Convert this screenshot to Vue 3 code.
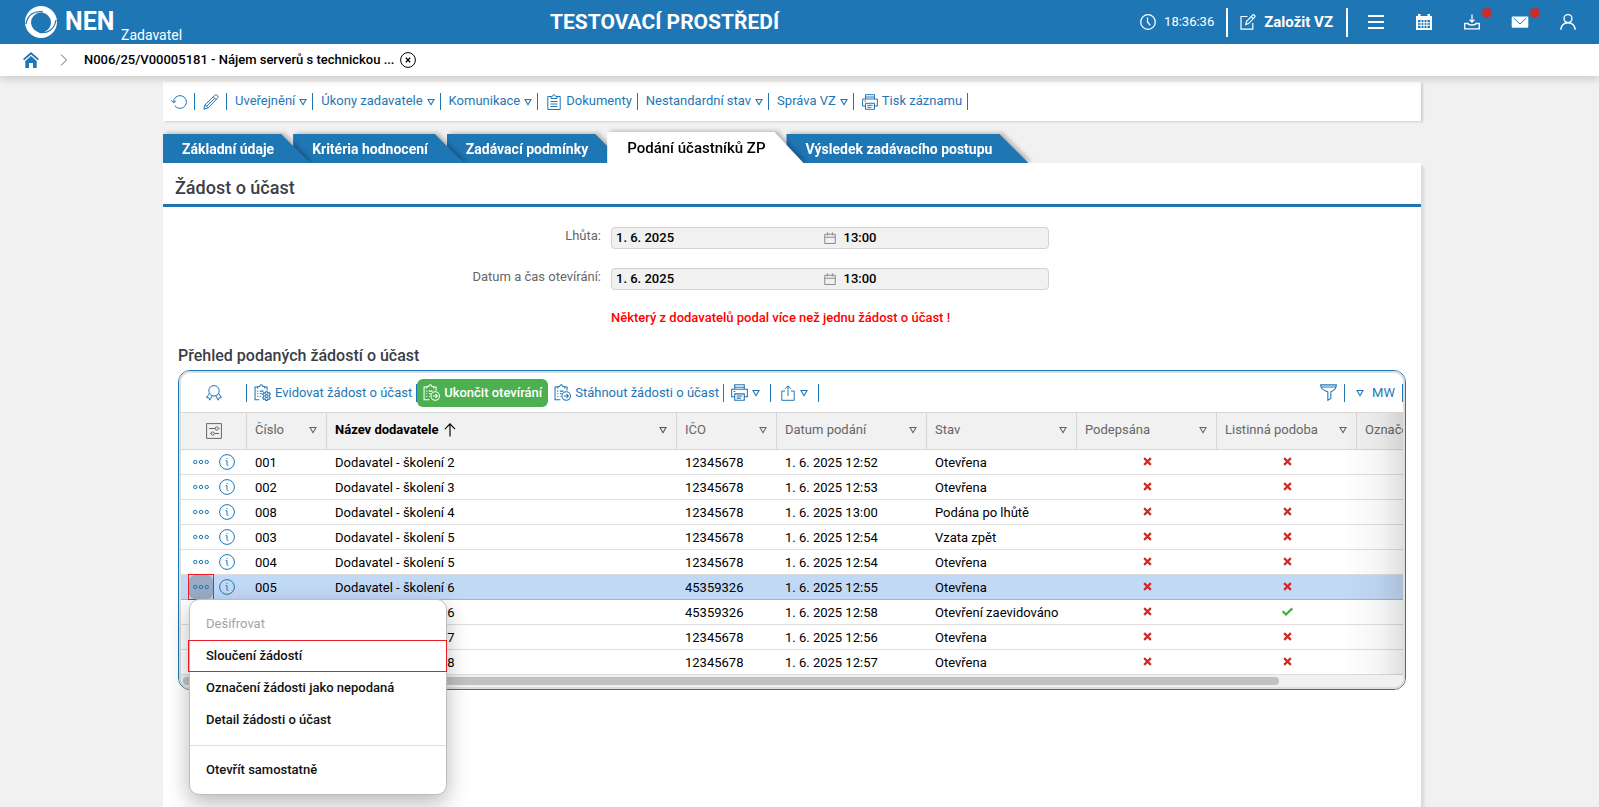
<script setup>
import { h } from 'vue'

const shapes = {
  refresh: '<path d="M2.600 8.500a6.400 6.400 0 1 1 1.300 3.400M.3 6.300l2.300 2.500 2.600-2.100"/>',
  pencil: '<path d="M.8 15.200l1.300-4.500L11.800 1.300c1.700-1.500 4.200.9 2.800 2.700L5.200 13.800zM10.300 2.800l2.900 2.900M2.100 10.700l3.100 3.100M3.600 12.300l8-8"/>',
  doc: '<path d="M5 2.500H1.800v13h12.400v-13H11M5 4.500v-2l2-.5c0-2 2-2 2 0l2 .5v2zM4.500 7.500h7M4.500 10h7M4.500 12.500h7"/>',
  print: '<path d="M3.500 5V.7h9V5M3.500 12H.6V5h14.800v7h-2.900M3.500 9.300h9v6h-9zM5.300 11.300h5.400M5.300 13.300h4M2.500 7h1.500M3.500 3h9"/>',
  badge: '<circle cx="8" cy="5.800" r="5.200"/><path d="M3.300 8.400L.6 12.600l2.300.2.900 2.400 2.400-4.400M12.700 8.400l2.700 4.200-2.300.2-.9 2.400-2.400-4.400"/>',
  docGear: '<path d="M5 14.800H1v-12h2.500M10 2.800h2.300V6M3.500 4.300V2.600l2-.4c0-2 2.600-2 2.600 0l2 .4v1.700M3 6.700h1M5.500 6.700H9M3 9.200h1M5.500 9.200h2M3 11.700h1M5.500 11.700h1"/><circle cx="11.800" cy="11.400" r="1.400"/><path d="M11 7.300h1.600l.4 1.400 1.500-.5.9 1.300-1 1.200v1.400l1 1-.9 1.300-1.500-.4-.4 1.400H11l-.5-1.400-1.500.4-.8-1.300 1-1v-1.400l-1-1.200.8-1.300 1.500.5z"/>',
  docArrow: '<path d="M6 14.800H1v-12h2.500M10 2.800h2.300V6M3.500 4.300V2.600l2-.4c0-2 2.600-2 2.600 0l2 .4v1.700M3 6.700h1M5.500 6.700H9M3 9.200h1M5.500 9.200h1.800M3 11.700h1M5.500 11.700h.8"/><circle cx="11.500" cy="11.300" r="4"/><path d="M9.300 11.300h4M11.800 9.600l1.700 1.700-1.700 1.700"/>',
  share: '<path d="M5 6H1.800v9.300h12.400V6H11M8 11V1M5 3.800L8 .8l3 3"/>',
  funnel: '<path d="M.6.8h14.800c0 4-2.600 5.700-5.200 6.600v6.300l-2.800 1.700v-8C4 6.500.6 4.600.6.800zM1 2.800h14"/>',
  tune: '<path d="M.6.600h14.800v14.800H.6zM3 5.500h6.200M4 10.500h1M8.500 10.500H13M12.500 5.500h1"/><circle cx="10.800" cy="5.500" r="1.600"/><circle cx="6.700" cy="10.500" r="1.600"/>',
  dots: '<circle cx="2.300" cy="8" r="1.700"/><circle cx="8" cy="8" r="1.700"/><circle cx="13.700" cy="8" r="1.700"/>',
  info: '<circle cx="8" cy="8" r="7.400"/><path d="M6.600 6.700H8v3.800c0 .9.400 1.200 1.400.9M7.500 4.500h1"/>',
  clock: '<circle cx="8" cy="8" r="7.300" stroke-width="1.300"/><path stroke-width="1.300" d="M7.500 3.500V8l2.800 3.300"/>',
  compose: '<path stroke-width="1.200" d="M7.500 2.500H1v12.700h11.800V9M5.800 10.500l.8-3.200 6-6.200c1.200-1.100 3.200.8 2.100 2.100L8.600 9.600zM11.200 2.700l2 2"/>',
  menu: '<path stroke-width="2" d="M0 2h16M0 8h16M0 14h16"/>',
  calendar: '<path fill="currentColor" fill-rule="evenodd" stroke="none" d="M0 2h2V0h2.500v2h7V0H14v2h2v14H0zM2 6v8h12V6z"/><path stroke-width="1" d="M2 8.700h12M2 11.300h12M5 6v8M8 6v8M11 6v8"/>',
  inbox: '<path stroke-width="1.300" d="M8 .5v7.500M5.500 5.600L8 8.100l2.500-2.500"/><path stroke-width="1.300" d="M.7 9.500H4c.5 2 7.500 2 8 0h3.300v5.300H.7z"/>',
  mail: '<rect x="-.3" y="2.500" width="16.600" height="11.300" rx="1" fill="currentColor" stroke="none"/><path stroke="#1f76b5" d="M2 4.200l6 5.800 6-5.800"/>',
  user: '<circle cx="8" cy="4.600" r="4" stroke-width="1.400"/><path stroke-width="1.400" d="M.9 15.800c0-4 2.800-7 7.100-7s7.100 3 7.100 7"/>',
  home: '<path fill="currentColor" stroke="none" d="M8 0l8 7-1.200 1.300L8 2.400 1.200 8.300 0 7zM8 4l5.700 5v7H10v-5H6v5H2.300V9z"/>',
  chevron: '<path d="M5 2.500l5.500 5.500L5 13.500"/>',
  close: '<circle cx="8" cy="8" r="7.400"/><path stroke-width="1.300" d="M5.800 5.800l4.400 4.400M10.200 5.800l-4.400 4.400"/>',
  date: '<path stroke-width="1.300" d="M1 3h14v12.300H1zM1 7h14M4.800.500V4.500M11.200.500V4.500"/>',
  up: '<path stroke-width="1.300" d="M8 15.500V1M2.200 7L8 1l5.800 6"/>',
  tri: '<path stroke-width="2.200" d="M2 3h12L8 13.500z"/>',
  cross: '<path stroke="#cf2a27" stroke-width="3.800" d="M2 2l12 12M14 2L2 14"/>',
  check: '<path stroke="#35b535" stroke-width="3.200" d="M1 7.500l4.800 4.800L15 3.500"/>',
}

const Icon = (props) =>
  h('svg', {
    viewBox: '0 0 16 16',
    width: props.size || 16,
    height: props.size || 16,
    fill: 'none',
    stroke: 'currentColor',
    overflow: 'visible',
    'aria-hidden': 'true',
    innerHTML: shapes[props.name],
  })
Icon.props = ['name', 'size']

const actions = [
  { icon: 'refresh', title: 'Obnovit' },
  { icon: 'pencil', title: 'Upravit' },
  { text: 'Uveřejnění', drop: true },
  { text: 'Úkony zadavatele', drop: true },
  { text: 'Komunikace', drop: true },
  { icon: 'doc', text: 'Dokumenty' },
  { text: 'Nestandardní stav', drop: true },
  { text: 'Správa VZ', drop: true },
  { icon: 'print', text: 'Tisk záznamu' },
]

const tabs = ['Základní údaje', 'Kritéria hodnocení', 'Zadávací podmínky', 'Podání účastníků ZP', 'Výsledek zadávacího postupu']
const activeTab = 3

const fields = [
  { id: 'lhuta', label: 'Lhůta:', date: '1. 6. 2025', time: '13:00' },
  { id: 'otevirani', label: 'Datum a čas otevírání:', date: '1. 6. 2025', time: '13:00' },
]

const columns = ['Číslo', 'Název dodavatele', 'IČO', 'Datum podání', 'Stav', 'Podepsána', 'Listinná podoba', 'Označena jako nepodaná']
const rows = [
  ['001', 'Dodavatel - školení 2', '12345678', '1. 6. 2025 12:52', 'Otevřena', false],
  ['002', 'Dodavatel - školení 3', '12345678', '1. 6. 2025 12:53', 'Otevřena', false],
  ['008', 'Dodavatel - školení 4', '12345678', '1. 6. 2025 13:00', 'Podána po lhůtě', false],
  ['003', 'Dodavatel - školení 5', '12345678', '1. 6. 2025 12:54', 'Vzata zpět', false],
  ['004', 'Dodavatel - školení 5', '12345678', '1. 6. 2025 12:54', 'Otevřena', false],
  ['005', 'Dodavatel - školení 6', '45359326', '1. 6. 2025 12:55', 'Otevřena', false],
  ['006', 'Dodavatel - školení 6', '45359326', '1. 6. 2025 12:58', 'Otevření zaevidováno', true],
  ['007', 'Dodavatel - školení 7', '12345678', '1. 6. 2025 12:56', 'Otevřena', false],
  ['009', 'Dodavatel - školení 8', '12345678', '1. 6. 2025 12:57', 'Otevřena', false],
]
const selected = '005'
</script>

<template>
  <div class="page">
    <header class="top">
      <a href="#" class="brand">
        <svg class="logo" viewBox="0 0 32 32" width="32" height="32" aria-hidden="true">
          <path fill="#fff" fill-rule="evenodd" d="M16 0a16 16 0 1 1 0 32A16 16 0 0 1 16 0zM16 6.500a10 10 0 1 0 0 20 10 10 0 0 0 0-20z" />
          <path fill="none" stroke="#1f76b5" stroke-width="1.200" d="M1 18C2.500 9 9 4.500 18 5.800M31 14c-1.500 9-8 14-17 12.300" />
        </svg>
        <span class="name">NEN</span>
        <span class="role">Zadavatel</span>
      </a>
      <div class="env">TESTOVACÍ PROSTŘEDÍ</div>
      <div class="tools">
        <span class="time"><Icon name="clock" /> 18:36:36</span>
        <button class="create"><Icon name="compose" /> Založit VZ</button>
        <button class="tool" aria-label="Menu"><Icon name="menu" /></button>
        <button class="tool" aria-label="Kalendář"><Icon name="calendar" /></button>
        <button class="tool" aria-label="Stažené soubory"><Icon name="inbox" /><i class="dot"></i></button>
        <button class="tool" aria-label="Zprávy"><Icon name="mail" /><i class="dot"></i></button>
        <button class="tool" aria-label="Uživatel"><Icon name="user" /></button>
      </div>
    </header>

    <nav class="crumbs">
      <a href="#" class="home" aria-label="Domů"><Icon name="home" /></a>
      <Icon name="chevron" class="chev" />
      <a href="#" class="crumb">N006/25/V00005181 - Nájem serverů s technickou ...</a>
      <button class="close" aria-label="Zavřít"><Icon name="close" /></button>
    </nav>

    <main class="content">
      <div class="actions">
        <button v-for="a in actions" :key="a.text || a.title" class="action" :aria-label="a.text || a.title">
          <Icon v-if="a.icon" :name="a.icon" />
          <span v-if="a.text">{{ a.text }}</span>
          <Icon v-if="a.drop" name="tri" size="8" class="drop" />
        </button>
      </div>

      <nav class="tabs">
        <div v-for="(t, i) in tabs" :key="t" class="tab" :class="{ active: i === activeTab }" :style="{ zIndex: i === activeTab ? 9 : 8 - i }">
          <a href="#">{{ t }}</a>
        </div>
      </nav>

      <section class="panel">
        <h1>Žádost o účast</h1>
        <form class="form">
          <template v-for="f in fields" :key="f.id">
            <label :for="f.id">{{ f.label }}</label>
            <div class="field">
              <input :id="f.id" type="text" class="day" :value="f.date" readonly />
              <Icon name="date" size="12" class="date" />
              <input type="text" :value="f.time" :aria-label="f.label + ' čas'" readonly />
            </div>
          </template>
          <p class="warn">Některý z dodavatelů podal více než jednu žádost o účast !</p>
        </form>

        <h2>Přehled podaných žádostí o účast</h2>
        <div class="grid">
          <div class="inner">
            <div class="bar">
              <button class="gbtn badge" aria-label="Certifikát"><Icon name="badge" /></button>
              <button class="gbtn"><Icon name="docGear" size="17" /> Evidovat žádost o účast</button>
              <button class="finish"><Icon name="docArrow" size="17" /> Ukončit otevírání</button>
              <button class="gbtn"><Icon name="docArrow" size="17" /> Stáhnout žádosti o účast</button>
              <button class="gbtn wide" aria-label="Tisk"><Icon name="print" size="17" /><Icon name="tri" size="8" /></button>
              <button class="gbtn wide" aria-label="Export"><Icon name="share" /><Icon name="tri" size="8" /></button>
              <button class="gbtn filter" aria-label="Filtr"><Icon name="funnel" size="17" /></button>
              <button class="gbtn view"><Icon name="tri" size="8" /> MW</button>
            </div>
            <div class="scroller">
              <table>
                <colgroup>
                  <col class="c-tools" /><col class="c-no" /><col class="c-name" /><col class="c-ico" />
                  <col class="c-mid" /><col class="c-mid" /><col class="c-flag" /><col class="c-flag" /><col class="c-last" />
                </colgroup>
                <thead>
                  <tr>
                    <th class="setup"><button class="plain" aria-label="Nastavení sloupců"><Icon name="tune" /></button></th>
                    <th v-for="(c, i) in columns" :key="c" :class="{ sorted: i === 1 }">
                      <div class="head">
                        <span>{{ c }}</span>
                        <Icon v-if="i === 1" name="up" size="14" />
                        <Icon name="tri" size="8" class="sort" />
                      </div>
                    </th>
                  </tr>
                </thead>
                <tbody>
                  <tr v-for="r in rows" :key="r[0]" :class="{ sel: r[0] === selected }">
                    <td class="rowtools">
                      <div class="pair">
                        <button class="plain more" :aria-label="'Akce ' + r[0]"><Icon name="dots" /></button>
                        <button class="plain" :aria-label="'Detail ' + r[0]"><Icon name="info" /></button>
                      </div>
                    </td>
                    <td v-for="n in 5" :key="n" class="text">{{ r[n - 1] }}</td>
                    <td class="flag"><Icon name="cross" size="9" /></td>
                    <td class="flag"><Icon :name="r[5] ? 'check' : 'cross'" :size="r[5] ? 11 : 9" /></td>
                    <td></td>
                  </tr>
                </tbody>
              </table>
              <div class="fade"></div>
            </div>
            <div class="track"><div class="thumb"></div></div>
          </div>

          <div class="menu">
            <button disabled>Dešifrovat</button>
            <button class="marked">Sloučení žádostí</button>
            <button>Označení žádosti jako nepodaná</button>
            <button>Detail žádosti o účast</button>
            <hr />
            <button>Otevřít samostatně</button>
          </div>
        </div>
      </section>
    </main>
  </div>
</template>

<style>
body {
  margin: 0;
  background: #f1f1f1;
}
</style>

<style scoped>
* {
  box-sizing: border-box;
}
.page {
  display: flex;
  flex-direction: column;
  min-height: 100vh;
  overflow: hidden;
  font: 13px/16px Roboto, "Liberation Sans", sans-serif;
  color: #000;
}
svg {
  display: block;
  flex: none;
}
a {
  color: inherit;
  text-decoration: none;
}
button {
  display: flex;
  align-items: center;
  padding: 0;
  border: 0;
  background: none;
  font: inherit;
  color: inherit;
}
.top {
  display: grid;
  grid-template-columns: 1fr auto 1fr;
  align-items: center;
  height: 44px;
  padding: 0 23px 0 25px;
  background: #1f76b5;
  color: #fff;
}
.brand {
  display: flex;
  align-items: center;
  height: 44px;
}
.name {
  min-width: 52px;
  margin-left: 8px;
  font-size: 25px;
  line-height: 28px;
  font-weight: 700;
}
.role {
  align-self: flex-end;
  margin: 0 0 1px 4px;
  font-size: 14px;
  line-height: 16px;
}
.env {
  padding-right: 272px;
  font-size: 21px;
  line-height: 24px;
  font-weight: 700;
}
.tools {
  display: flex;
  align-items: center;
  justify-content: flex-end;
}
.time {
  display: flex;
  align-items: center;
  gap: 8px;
  padding-right: 12px;
}
.create {
  gap: 8px;
  height: 29px;
  margin-right: 20px;
  padding: 0 13px 0 12px;
  border: solid #fff;
  border-width: 0 2px;
  font-size: 15px;
  font-weight: 700;
}
.tool {
  position: relative;
  margin-left: 32px;
}
.create + .tool {
  margin-left: 0;
}
.dot {
  position: absolute;
  top: -6px;
  right: -12px;
  width: 10px;
  height: 10px;
  border-radius: 50%;
  background: #cd2c2c;
}
.crumbs {
  display: flex;
  align-items: center;
  position: relative;
  z-index: 20;
  height: 32px;
  padding-left: 23px;
  background: #fff;
  box-shadow: 0 3px 8px rgba(0, 0, 0, 0.16);
}
.home {
  color: #1f76b5;
}
.chev {
  margin: 0 12px 0 17px;
  color: #666;
}
.crumb {
  font-weight: 500;
}
.close {
  margin-left: 6px;
}
.content {
  display: flex;
  flex: 1;
  flex-direction: column;
  margin: 6px 178px 0 163px;
}
.actions {
  display: flex;
  align-items: center;
  height: 39px;
  background: #fff;
  box-shadow: 2px 1px 2px rgba(0, 0, 0, 0.14);
  color: #1f76b5;
}
.action {
  gap: 4px;
  height: 17px;
  padding: 0 7px 0 8px;
  border-right: 1px solid #1f76b5;
}
.action:nth-child(n + 3) {
  padding: 0 5px 0 8px;
}
.action span {
  padding-bottom: 2px;
}
.tabs {
  display: flex;
  align-items: flex-end;
  height: 31px;
  margin-top: 11px;
}
.tab {
  position: relative;
  margin-right: -17px;
  filter: drop-shadow(3px -1px 2px rgba(0, 0, 0, 0.25));
}
.tab a {
  display: block;
  padding: 2px 36px 0 19px;
  background: #1f76b5;
  clip-path: polygon(0 0, calc(100% - 29px) 0, 100% 100%, 0 100%);
  font-size: 14px;
  line-height: 27px;
  font-weight: 700;
  color: #fff;
}
.tab.active a {
  padding: 2px 38px 0 20px;
  background: #fff;
  font-size: 15px;
  line-height: 29px;
  font-weight: 500;
  color: #000;
}
.panel {
  position: relative;
  z-index: 10;
  flex: 1;
  background: #fff;
  box-shadow: 3px 3px 3px rgba(0, 0, 0, 0.1);
}
h1 {
  height: 44px;
  margin: 0;
  padding: 13px 12px 0;
  border-bottom: 3px solid #1f76b5;
  font-size: 18px;
  line-height: 24px;
  font-weight: 500;
  color: #3a4046;
}
.form {
  display: grid;
  grid-template-columns: 438fr 438fr 362fr;
  gap: 19px 10px;
  padding-top: 20px;
}
.form label {
  grid-column: 1;
  padding-top: 1px;
  text-align: right;
  color: #666;
}
.field {
  display: flex;
  align-items: center;
  height: 22px;
  padding-left: 4px;
  border: 1px solid #d2d2d2;
  border-radius: 4px;
  background: #f1f1f1;
}
.field input {
  flex: 1;
  min-width: 0;
  padding: 0;
  border: 0;
  outline: 0;
  background: none;
  font: 500 13px/16px Roboto, sans-serif;
  color: #000;
}
.day {
  margin-right: 3px;
}
.date {
  margin-right: 8px;
  color: #888;
}
.warn {
  grid-column: 2;
  margin: 0;
  padding-top: 1px;
  font-weight: 500;
  white-space: nowrap;
  color: #f00;
}
h2 {
  margin: 21px 15px 5px;
  font-size: 16px;
  line-height: 18px;
  font-weight: 500;
  color: #3a4046;
}
.grid {
  position: relative;
  margin: 0 15px;
  border: 1px solid #1f76b5;
  border-radius: 12px;
}
.inner {
  overflow: hidden;
  border: 2px solid #dedede;
  border-radius: 11px;
}
.bar {
  display: flex;
  align-items: center;
  height: 39px;
  color: #1f76b5;
}
.gbtn {
  gap: 4px;
  height: 18px;
  padding: 0 4px 0 7px;
  border-right: 1px solid #1f76b5;
  white-space: nowrap;
}
.badge {
  width: 66px;
  justify-content: center;
  padding: 0;
}
.wide {
  padding-right: 10px;
}
.wide + .wide {
  padding-left: 9px;
}
.finish {
  gap: 4px;
  height: 28px;
  padding: 0 6px;
  border-radius: 6px;
  background: #4caf50;
  font-weight: 500;
  color: #fff;
}
.finish + .gbtn {
  padding-left: 6px;
}
.filter {
  margin-left: auto;
  padding-right: 7px;
}
.view {
  gap: 8px;
  padding: 0 7px 0 11px;
}
.scroller {
  position: relative;
  overflow: hidden;
}
.fade {
  position: absolute;
  inset: 1px 0 0 auto;
  width: 60px;
  background: linear-gradient(to right, rgba(0, 0, 0, 0), rgba(0, 0, 0, 0.04) 60%, rgba(0, 0, 0, 0.12));
}
table {
  width: 1366px;
  table-layout: fixed;
  border-collapse: separate;
  border-spacing: 0;
}
.c-tools {
  width: 66px;
}
.c-no {
  width: 80px;
}
.c-name {
  width: 350px;
}
.c-ico {
  width: 100px;
}
.c-mid {
  width: 150px;
}
.c-flag {
  width: 140px;
}
.c-last {
  width: 190px;
}
th {
  height: 38px;
  padding: 0 9px 0 8px;
  border: solid #d6d6d6;
  border-width: 1px 1px 1px 0;
  background: #f1f1f1;
  font-weight: 400;
  color: #666;
  text-align: left;
  white-space: nowrap;
}
.setup {
  padding: 0;
}
.setup button {
  margin: 0 auto;
}
.head {
  display: flex;
  align-items: center;
  gap: 4px;
  padding-bottom: 2px;
}
.sorted {
  color: #555;
}
.sorted span,
.sorted span + svg {
  color: #000;
  font-weight: 700;
}
.sort {
  margin-left: auto;
}
td {
  height: 25px;
  padding: 0 8px;
  border-bottom: 1px solid #dedede;
  white-space: nowrap;
}
.text {
  padding-top: 2px;
}
.rowtools {
  padding: 0 0 0 8px;
  color: #1f76b5;
}
.pair {
  display: flex;
  align-items: center;
  gap: 6px;
}
.more {
  position: relative;
  isolation: isolate;
  justify-content: center;
  width: 24px;
  height: 24px;
}
.flag svg {
  margin: 0 auto 2px;
}
.sel td {
  border-bottom-color: #8dbbe8;
  background: #c2d9f5;
}
.sel .more {
  outline: 1px solid #ed1c24;
}
.sel .more::before {
  content: "";
  position: absolute;
  inset: 0;
  z-index: -1;
  border-radius: 6px;
  background: #9aacc4;
}
.track {
  height: 12px;
  padding: 2px;
  background: #f0f0f0;
}
.thumb {
  width: 90%;
  height: 8px;
  border-radius: 4px;
  background: #c1c1c1;
}
.menu {
  position: absolute;
  top: 228px;
  left: 10px;
  width: 258px;
  padding: 8px 0;
  border: 1px solid #bdbdbd;
  border-radius: 10px;
  background: #fff;
  box-shadow: 0 8px 22px rgba(0, 0, 0, 0.28);
}
.menu button {
  width: 100%;
  height: 32px;
  padding: 0 16px;
  font-weight: 500;
  color: #111;
}
.menu button:disabled {
  font-weight: 400;
  color: #a3a3a3;
}
.menu .marked {
  width: calc(100% + 1px);
  height: 30px;
  margin: 1px 0 1px -1px;
  padding: 0 17px;
  outline: 1px solid #ed1c24;
}
hr {
  height: 1px;
  margin: 9px 0 8px;
  border: 0;
  background: #dedede;
}
</style>
